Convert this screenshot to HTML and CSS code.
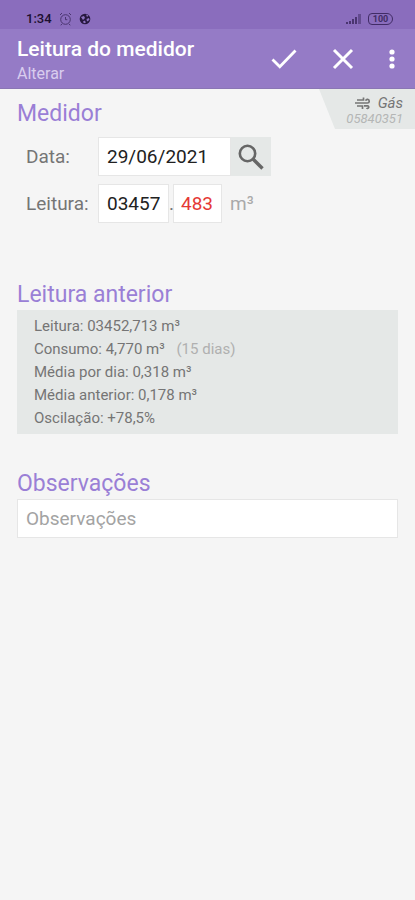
FILE: index.html
```html
<!DOCTYPE html>
<html lang="pt-BR">
<head>
  <meta charset="UTF-8">
  <meta name="viewport" content="width=device-width, initial-scale=1.0">
  <title>Leitura do medidor</title>
  <link rel="stylesheet" href="styles.css">
</head>
<body>
  <div class="status-bar">
    <span class="clock">1:34</span>
    <svg class="alarm" width="13" height="14" viewBox="0 0 13 14" fill="none" stroke="currentColor">
      <circle cx="6.5" cy="7.5" r="4.8"/>
      <path d="M6.5 5v2.7H8.3M1 3l2-2M12 3l-2-2M2.8 12l-1 1.3M10.2 12l1 1.3"/>
    </svg>
    <svg class="ball" width="12" height="12" viewBox="0 0 12 12">
      <circle cx="6" cy="6" r="5.3" fill="#27183f"/>
      <path d="M2 4l3-1 1 2-2 2zM7 1.5l2.5 1L8 4zM7.5 6L10 5l.5 2L8 8.5zM4 8.5l2-1 .8 2.3-2 .5z" fill="#8d72c0"/>
    </svg>
    <svg class="signal" width="16" height="12" viewBox="0 0 16 12" fill="currentColor">
      <path d="M0 9h2v2H0zM3 8h2v3H3zM6 6h2v5H6zM9 4h2v7H9z"/>
      <path d="M12 1h3v10h-3z" opacity=".6"/>
    </svg>
    <span class="battery">100</span>
  </div>

  <header class="toolbar">
    <div class="titles">
      <h1>Leitura do medidor</h1>
      <p>Alterar</p>
    </div>
    <button class="tool" type="button" aria-label="Salvar">
      <svg width="26" height="22" viewBox="0 0 26 22" fill="none" stroke="currentColor" stroke-width="2.8">
        <path d="M1.5 11.5l7.3 7.3L24.5 2.5"/>
      </svg>
    </button>
    <button class="tool" type="button" aria-label="Cancelar">
      <svg width="22" height="22" viewBox="0 0 22 22" fill="none" stroke="currentColor" stroke-width="3">
        <path d="M2 2l18 18M20 2L2 20"/>
      </svg>
    </button>
    <button class="tool more" type="button" aria-label="Mais opções">
      <svg width="6" height="20" viewBox="0 0 6 20" fill="currentColor">
        <circle cx="3" cy="3" r="2.6"/>
        <circle cx="3" cy="10" r="2.6"/>
        <circle cx="3" cy="17" r="2.6"/>
      </svg>
    </button>
  </header>

  <main>
    <section class="meter">
      <div class="meter-head">
        <h2>Medidor</h2>
        <div class="tag">
          <div class="tag-name">
            <svg width="16" height="14" viewBox="0 0 16 14" fill="none" stroke="currentColor" stroke-width="1.7">
              <path d="M2 4h6.500V1.500M0 7h12.500a1.800 1.800 0 1 0-1.800-2.300M2 10h5.500v3M9 9.800h3.500a1.300 1.300 0 1 1-1 2.200"/>
            </svg>
            Gás
          </div>
          <div class="tag-number">05840351</div>
        </div>
      </div>
      <div class="field">
        <label for="date">Data:</label>
        <input id="date" class="date" type="text" value="29/06/2021">
        <button class="search" type="button" aria-label="Escolher data">
          <svg width="28" height="28" viewBox="0 0 28 28" fill="none" stroke="currentColor">
            <circle cx="10.500" cy="10.500" r="7.700" stroke-width="2.600"/>
            <path d="M16 16l9.500 9.500" stroke-width="3.400"/>
          </svg>
        </button>
      </div>
      <div class="field">
        <label for="reading">Leitura:</label>
        <input id="reading" class="whole" type="text" value="03457">
        <span class="dot">.</span>
        <input class="decimals" type="text" value="483" aria-label="Decimais">
        <span class="unit">m³</span>
      </div>
    </section>

    <section class="previous">
      <h2>Leitura anterior</h2>
      <ul>
        <li>Leitura: 03452,713 m³</li>
        <li>Consumo: 4,770 m³ <span class="days">(15 dias)</span></li>
        <li>Média por dia: 0,318 m³</li>
        <li>Média anterior: 0,178 m³</li>
        <li>Oscilação: +78,5%</li>
      </ul>
    </section>

    <section class="notes">
      <h2><label for="notes">Observações</label></h2>
      <input id="notes" type="text" placeholder="Observações">
    </section>
  </main>
</body>
</html>
```
FILE: styles.css
```css
* {
  box-sizing: border-box;
}

body {
  margin: 0;
  background-color: #f5f5f5;
  color: #757575;
  font-family: Roboto, sans-serif;
}

h1, h2, p, ul {
  margin: 0;
  padding: 0;
  font-weight: 400;
}

button {
  padding: 0;
  border: none;
  background: none;
  display: flex;
  justify-content: center;
  align-items: center;
  cursor: pointer;
}

/* Status bar */
.status-bar {
  height: 29px;
  padding: 8px 22px 0 26px;
  display: flex;
  align-items: center;
  background-color: #8a6dbd;
  color: #4a3570;
}

.clock {
  color: #1c1030;
  font-size: 13px;
  font-weight: 500;
}

.alarm {
  margin-left: 7px;
}

.ball {
  margin-left: 7px;
}

.signal {
  margin-left: auto;
}

.battery {
  width: 25px;
  height: 12px;
  margin-left: 6px;
  border: 1px solid #412c66;
  border-radius: 4px 6px 6px 4px;
  color: #412c66;
  font-size: 9px;
  font-weight: 700;
  line-height: 10px;
  text-align: center;
}

/* Toolbar */
.toolbar {
  height: 60px;
  padding: 0 7px 0 17px;
  display: flex;
  align-items: center;
  background-color: #957bc6;
  border-bottom: 1px solid #8a76b4;
  color: #fff;
}

.titles {
  flex: 1;
  padding-top: 4px;
}

h1 {
  font-size: 21px;
  font-weight: 500;
  line-height: 26px;
}

.titles p {
  color: #d9cdee;
  font-size: 16px;
  line-height: 24px;
}

.tool {
  width: 59px;
  height: 48px;
  color: #fff;
}

.more {
  width: 32px;
  margin-left: 4px;
}

/* Sections */
h2 {
  color: #9a7fd6;
  font-size: 23px;
  line-height: 30px;
}

section {
  padding: 0 17px;
}

.meter {
  padding-right: 0;
}

.meter-head {
  display: flex;
  justify-content: space-between;
  align-items: flex-start;
  margin-bottom: 8px;
}

.meter-head h2 {
  padding-top: 10px;
}

.tag {
  width: 96px;
  height: 40px;
  padding: 5px 12px 0 0;
  background-color: #e5e8e7;
  clip-path: polygon(0 0, 100% 0, 100% 100%, 16px 100%);
  font-style: italic;
  text-align: right;
}

.tag-name {
  display: flex;
  justify-content: flex-end;
  align-items: center;
  gap: 7px;
  font-size: 15px;
  line-height: 18px;
}

.tag-number {
  color: #b4b6b5;
  font-size: 13px;
  line-height: 14px;
}

.field {
  display: flex;
  align-items: center;
  margin-bottom: 8px;
  padding-left: 9px;
  font-size: 19px;
}

.field label {
  width: 72px;
}

input {
  height: 39px;
  padding: 0 8px;
  border: 1px solid #e6e6e6;
  background-color: #fff;
  color: #212121;
  font-family: inherit;
  font-size: 19px;
}

.date {
  width: 133px;
}

.search {
  width: 40px;
  height: 39px;
  background-color: #e5e8e7;
  color: #666;
}

.whole {
  width: 71px;
}

.dot {
  width: 4px;
}

.decimals {
  width: 49px;
  padding: 0 7px;
  color: #e53935;
}

.unit {
  margin-left: 8px;
  color: #a9a9a9;
}

.previous {
  margin-top: 57px;
}

.previous ul {
  padding: 5px 17px 4px;
  background-color: #e5e8e7;
  font-size: 15px;
  line-height: 23px;
  list-style: none;
}

.days {
  margin-left: 8px;
  color: #b0b0b0;
}

.notes {
  margin-top: 35px;
}

.notes input {
  width: 100%;
}

.notes input::placeholder {
  color: #a3a3a3;
  opacity: 1;
}
```
